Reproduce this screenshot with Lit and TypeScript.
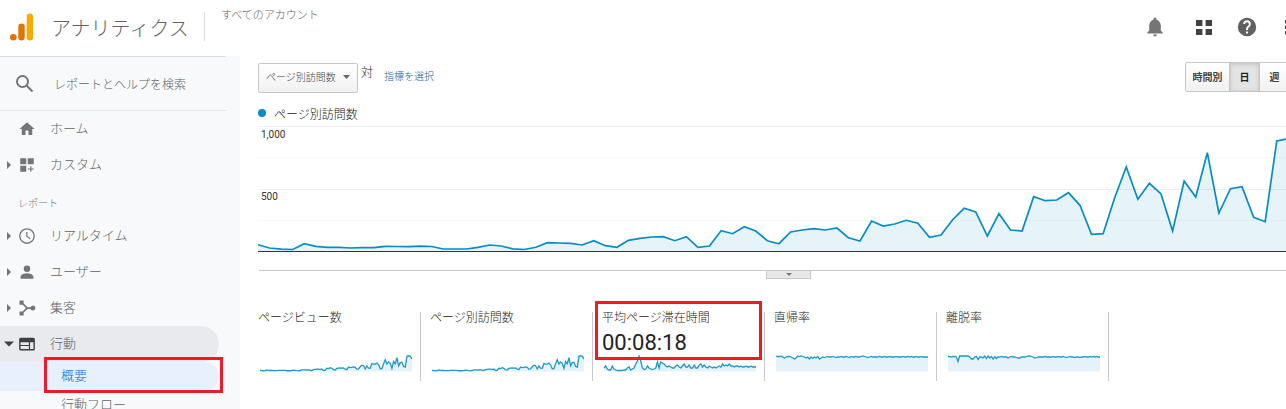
import { LitElement, html, css, svg, nothing } from "lit";
import { customElement, property } from "lit/decorators.js";
import { classMap } from "lit/directives/class-map.js";

// Heights above the baseline, in units of the chart's 126-unit tall canvas (1,000 visits = 125).
const VISITS = [
  6.3, 3, 1.8, 1.5, 7.3, 4.7, 3.7, 3.7, 3, 3.4, 3.4, 4.6, 4.5, 4.3, 4.8, 4.5, 2, 2, 2, 3.7, 6, 5,
  2.2, 1.5, 3.7, 8.4, 8, 7.7, 6, 10.4, 5.3, 3.7, 10.7, 12.7, 14, 14.3, 10.3, 14.3, 3.7, 5, 20.3,
  17.3, 24.3, 20, 10.3, 7.3, 19, 21, 22.3, 21, 23, 13.3, 10, 30, 25, 27, 30.7, 27.7, 13.7, 16, 31.3,
  42.7, 39, 15, 37.3, 21, 20, 54.3, 50.3, 51, 58.3, 45.7, 16.7, 17.3, 53.3, 84, 51.7, 67.7, 57, 20,
  70, 54, 98.3, 38, 62.3, 64.3, 33.7, 29.3, 110, 112.3, 111, 88,
];

const DURATION = [
  3, 5, 2, 1, 1, 5, 2, 1, 0.5, 0.5, 0.5, 0.5, 1, 1, 3, 4, 1, 2, 3, 7, 10, 15, 10, 3, 1.5, 2, 5, 3, 2,
  1.5, 2, 3, 9, 3, 9, 8, 7, 5, 4, 5, 4, 3, 3, 5, 6, 4, 3, 5, 7, 4, 4, 6, 3, 3, 6, 3, 3, 6, 7, 4, 6, 4,
  3, 5, 4, 3, 4, 3, 4, 5, 4, 7, 5, 6, 5, 7, 5, 5, 4, 5, 5, 4, 5, 4, 4, 5, 4, 4, 5, 4, 4, 4,
];

const BOUNCE = [
  15, 14.5, 14.5, 15, 14, 13, 14, 14.5, 14.5, 14, 13, 12, 13, 15, 14.5, 15, 14.5, 14, 13, 14, 12, 14,
  12.5, 14, 13, 14.5, 12, 13, 14, 13.5, 14, 14.5, 14, 14, 14.5, 14, 13.5, 14, 14, 14.5, 14, 14, 14.5,
  14, 13.5, 14.5, 14, 14, 14.5, 14, 14, 14.5, 15, 14.5, 14, 13.5, 14, 14.5, 14, 14, 14, 14, 14.5, 14,
  14, 14.5, 14, 14, 14.5, 14, 14, 14, 14.5, 14, 14, 14, 14.5, 14, 14, 14.5, 14, 14.5, 14, 14, 14.5,
  14, 14, 14.5, 14, 14, 14, 14,
];

const EXIT = [
  14.5, 14.5, 14, 14.5, 14.5, 14, 9.5, 15, 15, 15, 15, 15, 15, 14, 12, 12, 14, 14.5, 11.5, 14, 14, 13,
  15, 12.5, 15, 13, 14.5, 12, 14.5, 12.5, 14, 14, 14.5, 14, 14, 14, 13, 14, 14.5, 14, 14, 13.5, 13,
  13, 14, 14, 14, 14.5, 15, 15, 14.5, 14, 13, 13.5, 14, 14, 14, 14, 14.5, 14, 14, 14, 14, 14.5, 14,
  14, 14.5, 14, 14, 14.5, 14, 13.5, 14, 14.5, 14, 14, 13.5, 14, 14, 13.5, 14, 14, 14.5, 14, 14, 14.5,
  14, 14.5, 14, 14.5, 14, 14,
];

const toPoints = (data: number[], step: number, base: number, scale = 1) =>
  data.map((v, i) => `${(i * step).toFixed(2)},${(base - v * scale).toFixed(2)}`).join(" ");

const ICONS = {
  home: svg`<path d="M10 20v-6h4v6h5v-8h3L12 3 2 12h3v8z"/>`,
  custom: svg`<path d="M3 3h8v8H3zM13 3h8v8h-8zM3 13h8v8H3zM16.3 13.5h1.6v3h3v1.6h-3v3h-1.6v-3h-3v-1.6h3z"/>`,
  clock: svg`<path d="M12 1.500a10.500 10.500 0 1 0 0 21 10.500 10.500 0 0 0 0-21zm0 19.200a8.700 8.700 0 1 1 0-17.400 8.700 8.700 0 0 1 0 17.400zM12.600 6.500H11v6.300l4.900 3.400.9-1.300-4.200-2.900z"/>`,
  person: svg`<path d="M12 12a4.300 4.300 0 1 0 0-8.600 4.300 4.300 0 0 0 0 8.600zm0 1.800c-3 0-8.500 1.500-8.500 4.500V21h17v-2.700c0-3-5.500-4.500-8.500-4.500z"/>`,
  acquire: svg`<path d="M2 2h5.500v3.800l5 5.200h4.300a3.300 3.300 0 1 1 0 2.200h-4.300l-5 5.200V22H2v-5.500h4.200L10.500 12 6.200 7.500H2z"/>`,
  behavior: svg`<path d="M20.500 3.500h-17A2 2 0 0 0 1.500 5.500v13a2 2 0 0 0 2 2h17a2 2 0 0 0 2-2v-13a2 2 0 0 0-2-2zM14.500 18.600H3.400v-3.800h11.100zm0-5.300H3.400V9.500h11.100zm6.100 5.300h-4.500V9.500h4.500z"/>`,
};

@customElement("nav-item")
class NavItem extends LitElement {
  @property() icon: keyof typeof ICONS = "home";
  @property() label = "";
  @property({ type: Boolean }) expandable = false;
  @property({ type: Boolean }) open = false;

  static styles = css`
    :host { display: block; }
    .row {
      display: grid;
      grid-template-columns: 18px 32px 1fr;
      align-items: center;
      height: 36px;
      margin-right: 21px;
      color: #5f6368;
      font-size: 13px;
      text-decoration: none;
      border-radius: 0 18px 18px 0;
    }
    .row.open { background: #e8eaed; }
    .arrow { justify-self: center; width: 8px; height: 8px; fill: #757575; }
    .icon { width: 18px; height: 18px; fill: #757575; }
    .text { padding-bottom: 3px; }
    .open .arrow, .open .icon { fill: #3c4043; }
    .open .arrow { width: 10px; height: 10px; }
  `;

  render() {
    return html`<a class=${classMap({ row: true, open: this.open })} href="#">
      ${this.expandable
        ? html`<svg class="arrow" viewBox="0 0 8 8" aria-hidden="true">
            <path d=${this.open ? "M0 2h8L4 6z" : "M2 0l4 4-4 4z"} />
          </svg>`
        : html`<span></span>`}
      <svg class="icon" viewBox="0 0 24 24" aria-hidden="true">${ICONS[this.icon]}</svg>
      <span class="text">${this.label}</span>
    </a>`;
  }
}

@customElement("metric-card")
class MetricCard extends LitElement {
  @property() label = "";
  @property() value = "";
  @property({ attribute: false }) data: number[] = [];
  @property({ type: Number }) scale = 1;
  @property({ type: Boolean }) marked = false;

  static styles = css`
    :host { display: block; position: relative; border-right: 1px solid #c8c8c8; padding: 0 8px 9px 9px; }
    .label { font-size: 12px; line-height: 10px; color: #222; white-space: nowrap; }
    .value { height: 24px; margin-top: 9px; font: 22px/24px Roboto, sans-serif; color: #222; }
    .spark { display: block; width: 100%; height: 17px; }
    .area { fill: #e5f2f9; }
    .line { fill: none; stroke: #058dc7; stroke-width: 1.3; stroke-opacity: 0.9; }
    .mark { position: absolute; inset: -11px 2px 21px 2px; border: 3px solid #ed1c24; }
  `;

  render() {
    const line = toPoints(this.data, 1.67, 16, this.scale);
    return html`
      <div class="label">${this.label}</div>
      <div class="value">${this.value}</div>
      <svg class="spark" viewBox="-2 0 154 17" preserveAspectRatio="none" aria-hidden="true">
        <polygon class="area" points="0,16.500 ${line} 152,16.500"></polygon>
        <polyline class="line" points=${line}></polyline>
      </svg>
      ${this.marked ? html`<div class="mark"></div>` : nothing}
    `;
  }
}

@customElement("app-root")
class AppRoot extends LitElement {
  static styles = css`
    :host {
      display: flex;
      flex-direction: column;
      height: 100vh;
      overflow: hidden;
      background: #fff;
      font-family: "Noto Sans CJK JP", sans-serif;
      font-weight: 300;
      color: #222;
    }
    button, select, input { font-family: inherit; font-weight: inherit; }
    .header { display: flex; flex: none; height: 56px; }
    .brand { display: flex; align-items: center; width: 204px; height: 54px; box-sizing: border-box; padding-left: 9px; gap: 16px; }
    .logo { width: 26px; height: 28px; flex: none; }
    .title { font-size: 20px; color: #5f6368; white-space: nowrap; }
    .account {
      height: 29px;
      margin-top: 12px;
      padding-left: 16px;
      border-left: 1px solid #dadce0;
      font-size: 11px;
      line-height: 4px;
      color: #5f6368;
    }
    .actions {
      display: grid;
      grid-template-columns: 49px 43px 40px 24px;
      align-items: center;
      height: 54px;
      margin: 0 -13px 0 auto;
    }
    .action { width: 24px; height: 24px; padding: 0; border: 0; background: none; }
    .action svg { display: block; width: 24px; height: 24px; fill: #616161; }
    .action .bell { fill: #757575; }

    .body { display: flex; flex: 1; min-height: 0; }
    .sidebar { flex: none; width: 240px; background: #f8f9fb; overflow: hidden; }
    .search {
      display: flex;
      align-items: center;
      height: 53px;
      margin-right: 14px;
      padding-left: 15px;
      gap: 19px;
      border-top: 1px solid #dadce0;
      border-bottom: 1px solid #e4e6e9;
    }
    .search svg { width: 20px; height: 20px; fill: none; stroke: #757575; stroke-width: 2; flex: none; }
    .search input { flex: 1; min-width: 0; padding: 0; border: 0; outline: 0; background: none; font-size: 12px; color: #5f6368; }
    .search input::placeholder { color: #5f6368; opacity: 1; }
    .section { height: 30px; padding: 5px 0 0 18px; font-size: 10px; line-height: 30px; color: #757575; }
    .sub {
      display: block;
      height: 29px;
      margin-right: 21px;
      padding-left: 61px;
      font-size: 13px;
      line-height: 26px;
      color: #5f6368;
      text-decoration: none;
      border-radius: 0 15px 15px 0;
    }
    .sub.active { position: relative; background: #e8f0fe; color: #1967d2; }
    .mark { position: absolute; inset: -5px -4px -2px 44px; border: 3px solid #ed1c24; }

    .main { flex: 1; min-width: 0; padding: 6px 0 0 18px; overflow: hidden; }
    .toolbar { display: flex; height: 30px; }
    .picker { position: relative; }
    .picker select {
      appearance: none;
      width: 100px;
      height: 30px;
      padding: 0 0 2px 7px;
      border: 1px solid #c6c6c6;
      border-radius: 2px;
      background: linear-gradient(#fff, #f1f1f1);
      font-size: 10px;
      color: #444;
    }
    .picker svg { position: absolute; right: 8px; top: 13px; width: 7px; height: 4px; fill: #666; pointer-events: none; }
    .versus { margin-left: 3px; font-size: 12px; line-height: 20px; color: #222; }
    .choose { margin-left: 11px; font-size: 10px; line-height: 28px; color: #15609a; text-decoration: none; }
    .range { display: flex; margin: 0 -4px 0 auto; }
    .range button {
      width: 31px;
      height: 30px;
      margin-left: -1px;
      padding: 0 0 2px;
      border: 1px solid #c6c6c6;
      background: linear-gradient(#fff, #f1f1f1);
      font-size: 10px;
      font-weight: 700;
      color: #444;
    }
    .range .wide { width: 45px; border-radius: 2px 0 0 2px; }
    .range .on { background: #e4e4e4; box-shadow: inset 0 1px 4px #bbb; color: #222; z-index: 1; }
    .range .last { border-radius: 0 2px 2px 0; }

    .legend { display: flex; align-items: center; gap: 8px; height: 18px; margin: 12px 0 4px; font-size: 12px; color: #111; }
    .dot { width: 8px; height: 8px; border-radius: 50%; background: #058dc7; }
    .chart { position: relative; height: 126px; }
    .chart svg { display: block; width: 100%; height: 100%; }
    .tick { position: absolute; left: 3px; font: 10px/12px Roboto, sans-serif; color: #333; }
    .tick.top { top: 3px; }
    .tick.mid { top: 65px; }
    .grid { stroke: #efefef; }
    .minor { stroke: #f9f9f9; }
    .axis { stroke: #333; }
    .area { fill: #058dc7; fill-opacity: 0.1; }
    .line { fill: none; stroke: #058dc7; stroke-width: 1.7; vector-effect: non-scaling-stroke; }

    .divider { display: flex; justify-content: center; margin: 18px -32px 0 1px; border-top: 1px solid #c8c8c8; }
    .handle {
      display: flex;
      align-items: center;
      justify-content: center;
      width: 45px;
      height: 8px;
      padding: 0;
      border: 1px solid #c8c8c8;
      border-top: 0;
      background: #e8e8e8;
    }
    .handle svg { width: 6px; height: 3px; fill: #777; }
    .metrics { display: grid; grid-template-columns: repeat(5, 172px); margin: 33px 0 0 -9px; }
  `;

  render() {
    const line = toPoints(VISITS, 11.577, 125);
    return html`
      <header class="header">
        <div class="brand">
          <svg class="logo" viewBox="0 0 26 28" aria-hidden="true">
            <rect x="17.700" y="0.500" width="6.400" height="27" rx="3.200" fill="#f9ab00" />
            <rect x="9.300" y="10.500" width="6.400" height="17" rx="3.200" fill="#e37400" />
            <circle cx="4.300" cy="24.200" r="3.300" fill="#e37400" />
          </svg>
          <span class="title">アナリティクス</span>
        </div>
        <div class="account">すべてのアカウント</div>
        <div class="actions">
          <button class="action" aria-label="通知">
            <svg class="bell" viewBox="0 0 24 24"><path d="M12 21.500a2 2 0 0 0 1.900-1.900h-3.800a2 2 0 0 0 1.900 1.900zm5.800-6v-4.700c0-3-1.600-5.300-4.300-6V4a1.500 1.500 0 0 0-3 0v.8c-2.700.7-4.300 3-4.300 6v4.700l-1.900 1.900v1h15.400v-1z"/></svg>
          </button>
          <button class="action" aria-label="アプリ">
            <svg viewBox="0 0 24 24"><path fill="#424242" d="M4 5h6.400v6H4zM13.600 5H20v6h-6.400zM4 14h6.400v6H4zM13.600 14H20v6h-6.400z"/></svg>
          </button>
          <button class="action" aria-label="ヘルプ">
            <svg viewBox="0 0 24 24"><path d="M12 2.800a9.200 9.200 0 1 0 0 18.400 9.200 9.200 0 0 0 0-18.400zm1 15.600h-2v-2h2zm2-7.100-.9.900c-.7.700-1.100 1.300-1.100 2.700h-2v-.5c0-1.100.4-2.100 1.100-2.800l1.200-1.200c.4-.3.600-.8.600-1.300a1.900 1.900 0 0 0-3.800 0H8.200a3.800 3.800 0 0 1 7.600 0c0 .9-.3 1.600-.8 2.200z"/></svg>
          </button>
          <button class="action" aria-label="その他">
            <svg viewBox="0 0 24 24"><path fill="#424242" d="M10 5h4v3.500h-4zM10 10.500h4V14h-4zM10 16h4v3.500h-4z"/></svg>
          </button>
        </div>
      </header>
      <div class="body">
        <nav class="sidebar">
          <label class="search">
            <svg viewBox="0 0 20 20" aria-hidden="true"><circle cx="7.500" cy="7.500" r="5.500"/><path d="M11.500 11.500l6 6"/></svg>
            <input type="search" aria-label="検索" placeholder="レポートとヘルプを検索" />
          </label>
          <nav-item icon="home" label="ホーム"></nav-item>
          <nav-item icon="custom" label="カスタム" expandable></nav-item>
          <div class="section">レポート</div>
          <nav-item icon="clock" label="リアルタイム" expandable></nav-item>
          <nav-item icon="person" label="ユーザー" expandable></nav-item>
          <nav-item icon="acquire" label="集客" expandable></nav-item>
          <nav-item icon="behavior" label="行動" expandable open></nav-item>
          <a class="sub active" href="#">概要<span class="mark"></span></a>
          <a class="sub" href="#">行動フロー</a>
        </nav>
        <main class="main">
          <div class="toolbar">
            <div class="picker">
              <select aria-label="指標"><option>ページ別訪問数</option></select>
              <svg viewBox="0 0 7 4" aria-hidden="true"><path d="M0 0h7L3.500 4z"/></svg>
            </div>
            <span class="versus">対</span>
            <a class="choose" href="#">指標を選択</a>
            <div class="range">
              <button class="wide">時間別</button>
              <button class="on" aria-pressed="true">日</button>
              <button class="last">週</button>
            </div>
          </div>
          <div class="legend"><span class="dot"></span>ページ別訪問数</div>
          <div class="chart">
            <svg viewBox="0 0 1028 126" preserveAspectRatio="none" aria-hidden="true">
              <path class="grid" d="M0 .5H1028M0 63.500H1028"/>
              <path class="minor" d="M0 31.500H1028M0 94.500H1028"/>
              <polygon class="area" points="0,125 ${line} 1053.500,125"></polygon>
              <polyline class="line" points=${line}></polyline>
              <path class="axis" d="M0 125.500H1028"/>
            </svg>
            <span class="tick top">1,000</span>
            <span class="tick mid">500</span>
          </div>
          <div class="divider">
            <button class="handle" aria-label="展開"><svg viewBox="0 0 6 3"><path d="M0 0h6L3 3z"/></svg></button>
          </div>
          <section class="metrics">
            <metric-card label="ページビュー数" .data=${VISITS} scale="0.135"></metric-card>
            <metric-card label="ページ別訪問数" .data=${VISITS} scale="0.135"></metric-card>
            <metric-card label="平均ページ滞在時間" value="00:08:18" .data=${DURATION} marked></metric-card>
            <metric-card label="直帰率" .data=${BOUNCE}></metric-card>
            <metric-card label="離脱率" .data=${EXIT}></metric-card>
          </section>
        </main>
      </div>
    `;
  }
}
